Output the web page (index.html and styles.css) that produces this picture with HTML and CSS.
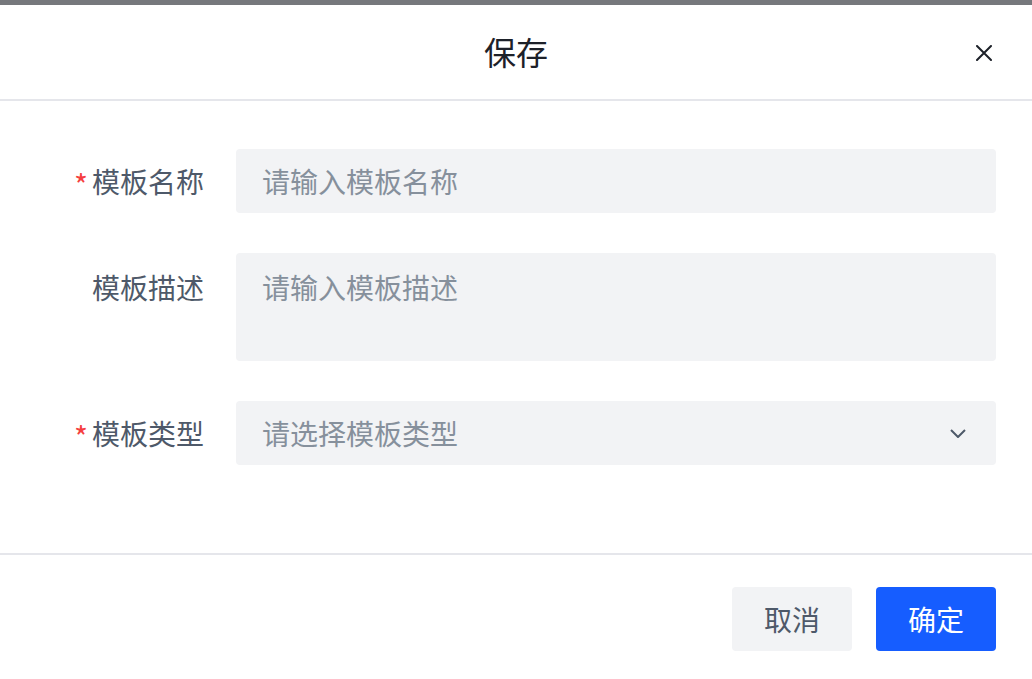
FILE: index.html
```html
<!DOCTYPE html>
<html lang="zh-CN">
<head>
<meta charset="utf-8">
<title>保存</title>
<link rel="stylesheet" href="styles.css">
</head>
<body>
<div class="topbar"></div>
<div class="dialog">
  <div class="header">
    <div class="title">保存</div>
    <button class="close" aria-label="关闭">
      <svg width="16" height="16" viewBox="0 0 16 16"><path d="M1 1L15 15M15 1L1 15" stroke="#1d2129" stroke-width="2" stroke-linecap="round" fill="none"/></svg>
    </button>
  </div>
  <div class="body">
    <div class="row">
      <label class="label"><span class="req">*</span>模板名称</label>
      <div class="field input"><span class="ph">请输入模板名称</span></div>
    </div>
    <div class="row top">
      <label class="label desc">模板描述</label>
      <div class="field textarea"><span class="ph">请输入模板描述</span></div>
    </div>
    <div class="row">
      <label class="label"><span class="req">*</span>模板类型</label>
      <div class="field input select"><span class="ph">请选择模板类型</span>
        <svg class="chev" width="16" height="9" viewBox="0 0 16 9"><path d="M1 1L8 8L15 1" stroke="#4e5969" stroke-width="2" fill="none" stroke-linejoin="round"/></svg>
      </div>
    </div>
  </div>
  <div class="footer">
    <button class="btn cancel">取消</button>
    <button class="btn ok">确定</button>
  </div>
</div>
</body>
</html>
```
FILE: styles.css
```css
* { box-sizing: border-box; }
html, body { margin: 0; padding: 0; background: #fff; }
body {
  font-family: "Noto Sans CJK SC", "Noto Sans", "Liberation Sans", sans-serif;
  width: 1032px;
  height: 679px;
  overflow: hidden;
}
.topbar { height: 5px; background: #76787c; }
.dialog { background: #fff; }
.header {
  height: 96px;
  border-bottom: 2px solid #e5e6eb;
  display: flex;
  align-items: center;
  justify-content: center;
  position: relative;
}
.title {
  font-size: 32px;
  color: #1d2129;
  line-height: 44px;
  margin-top: -2px;
}
.close {
  position: absolute;
  right: 40px;
  top: 40px;
  width: 16px;
  height: 16px;
  padding: 0;
  border: 0;
  background: none;
  display: flex;
}
.body {
  padding: 48px 36px 88px 36px;
  display: flex;
  flex-direction: column;
  gap: 40px;
}
.row {
  display: flex;
  align-items: center;
}
.row.top { align-items: flex-start; }
.label {
  width: 168px;
  flex: none;
  text-align: right;
  margin-right: 32px;
  font-size: 28px;
  color: #4e5969;
  line-height: 40px;
  white-space: nowrap;
}
.label.desc { margin-top: 14px; }
.req {
  color: #f53f3f;
  margin-right: 4px;
  font-size: 30px;
  vertical-align: -4px;
  line-height: 1;
}
.field {
  flex: 1;
  background: #f2f3f5;
  border-radius: 4px;
  font-size: 28px;
  color: #86909c;
}
.input {
  height: 64px;
  display: flex;
  align-items: center;
  padding: 0 30px 0 26px;
}
.textarea {
  height: 108px;
  padding: 14px 26px;
  line-height: 40px;
}
.ph { line-height: 40px; }
.select { justify-content: space-between; }
.chev { display: block; }
.footer {
  border-top: 2px solid #e5e6eb;
  padding: 32px 36px 28px;
  display: flex;
  justify-content: flex-end;
  gap: 24px;
}
.btn {
  width: 120px;
  height: 64px;
  border: 0;
  border-radius: 4px;
  font-family: inherit;
  font-size: 28px;
  padding: 0;
}
.cancel { background: #f2f3f5; color: #4e5969; }
.ok { background: #165dff; color: #fff; }
```
